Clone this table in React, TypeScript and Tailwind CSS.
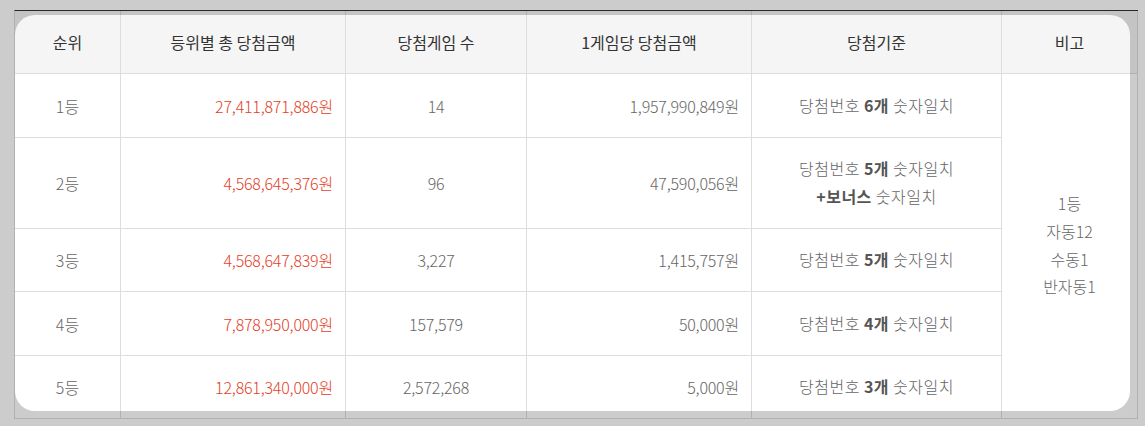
import React from "react"

type Row = {
	rank: string
	total: string
	games: string
	perGame: string
	criteria: React.ReactNode
	h: string
}

const rows: Row[] = [
	{
		rank: "1등",
		total: "27,411,871,886원",
		games: "14",
		perGame: "1,957,990,849원",
		criteria: (
			<>
				당첨번호 <b className="font-bold text-[#555]">6개</b> 숫자일치
			</>
		),
		h: "h-[64px]",
	},
	{
		rank: "2등",
		total: "4,568,645,376원",
		games: "96",
		perGame: "47,590,056원",
		criteria: (
			<>
				당첨번호 <b className="font-bold text-[#555]">5개</b> 숫자일치
				<br />
				<b className="font-bold text-[#555]">+보너스</b> 숫자일치
			</>
		),
		h: "h-[91px]",
	},
	{
		rank: "3등",
		total: "4,568,647,839원",
		games: "3,227",
		perGame: "1,415,757원",
		criteria: (
			<>
				당첨번호 <b className="font-bold text-[#555]">5개</b> 숫자일치
			</>
		),
		h: "h-[63px]",
	},
	{
		rank: "4등",
		total: "7,878,950,000원",
		games: "157,579",
		perGame: "50,000원",
		criteria: (
			<>
				당첨번호 <b className="font-bold text-[#555]">4개</b> 숫자일치
			</>
		),
		h: "h-[64px]",
	},
	{
		rank: "5등",
		total: "12,861,340,000원",
		games: "2,572,268",
		perGame: "5,000원",
		criteria: (
			<>
				당첨번호 <b className="font-bold text-[#555]">3개</b> 숫자일치
			</>
		),
		h: "h-[63px]",
	},
]

const headers = ["순위", "등위별 총 당첨금액", "당첨게임 수", "1게임당 당첨금액", "당첨기준"]

const cell = "flex items-center border-r border-b border-[#dddddd]"

export default function App() {
	return (
		<div
			className="relative h-[426px] w-[1145px] overflow-hidden bg-white pl-[14px] pt-[10px] text-[16px]"
			style={{ fontFamily: '"Noto Sans CJK KR", "Noto Sans", sans-serif' }}
		>
			<div className="grid w-[1124px] grid-cols-[106px_225px_181px_225px_250px_136px] border-t border-l border-t-[#333333] border-l-[#dddddd]">
				{/* Header */}
				{headers.map((h) => (
					<div
						key={h}
						className={`${cell} h-[63px] justify-center bg-[#f5f5f5] pb-[1px] text-[#333]`}
					>
						{h}
					</div>
				))}
				<div className={`${cell} h-[63px] justify-center bg-[#f5f5f5] pb-[1px] text-[#333]`}>비고</div>

				{/* Body */}
				{rows.map((r, i) => (
					<React.Fragment key={r.rank}>
						<div className={`${cell} ${r.h} justify-center font-light text-[#666]`}>
							{r.rank}
						</div>
						<div
							className={`${cell} ${r.h} justify-end pr-[12px] font-light tracking-[-0.2px] text-[#e4401f]`}
						>
							{r.total}
						</div>
						<div className={`${cell} ${r.h} justify-center font-light tracking-[-0.2px] text-[#666]`}>
							{r.games}
						</div>
						<div
							className={`${cell} ${r.h} justify-end pr-[12px] font-light tracking-[-0.2px] text-[#666]`}
						>
							{r.perGame}
						</div>
						<div
							className={`${cell} ${r.h} justify-center pb-[2px] text-center font-light leading-[28px] tracking-[0.5px] text-[#666]`}
						>
							<div>{r.criteria}</div>
						</div>
						{i === 0 && (
							<div
								className={`${cell} row-span-5 justify-center pb-[1px] text-center font-light leading-[27.7px] text-[#666]`}
							>
								<div>
									1등
									<br />
									자동12
									<br />
									수동1
									<br />
									반자동1
								</div>
							</div>
						)}
					</React.Fragment>
				))}
			</div>

			{/* dimmed overlay with rounded spotlight */}
			<div className="pointer-events-none absolute top-[15px] left-[15px] h-[396px] w-[1115px] rounded-[20px] shadow-[0_0_0_2000px_rgba(0,0,0,0.2)]" />
		</div>
	)
}
